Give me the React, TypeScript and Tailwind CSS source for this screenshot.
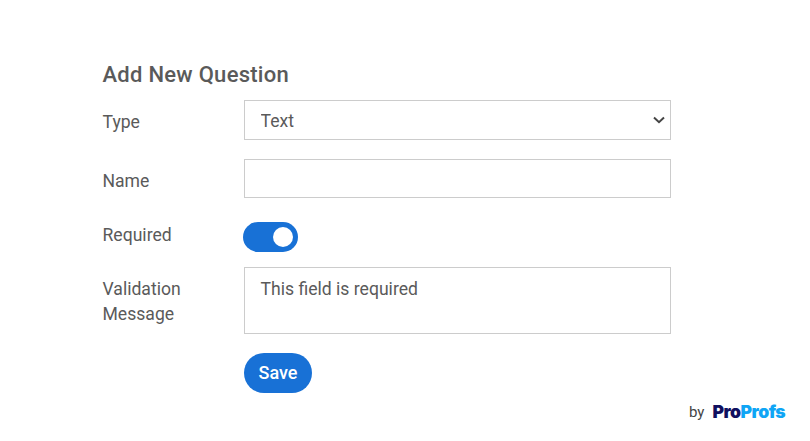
export default function App() {
  return (
    <div className="relative h-[441px] w-[810px] overflow-hidden bg-white font-['Roboto',sans-serif] text-[#5a5a5a]">
      <div className="flex flex-col pl-[102px] pt-[61px]">
        <h2 className="h-[39px] pl-[0.5px] text-[22px] leading-[27px] font-medium tracking-[0.27px] text-[#5a5a5a]">Add New Question</h2>
        <div className="flex h-[59px]">
          <label className="w-[142px] pt-[10px] pl-[0.5px] text-[17.6px] leading-[25px]">Type</label>
          <div className="relative h-[40px] w-[427px]">
            <select
              defaultValue="Text"
              className="h-[40px] w-[427px] appearance-none rounded-none border border-[#cccccc] bg-white pt-[2px] pl-[15.5px] text-[17.6px] text-[#5a5a5a] outline-none"
            >
              <option>Text</option>
            </select>
            <svg className="absolute top-[16px] right-[6px] h-[8px] w-[12px]" viewBox="0 0 12 8" fill="none">
              <path d="M1 1.5 L6 6.2 L11 1.5" stroke="#444444" strokeWidth="2" />
            </svg>
          </div>
        </div>
        <div className="flex h-[63px]">
          <label className="w-[142px] pt-[10px] pl-[0.5px] text-[17.6px] leading-[25px]">Name</label>
          <input type="text" className="h-[39px] w-[427px] border border-[#cccccc] bg-white outline-none" />
        </div>
        <div className="flex h-[45px]">
          <label className="w-[141px] pt-[1px] pl-[0.5px] text-[17.6px] leading-[25px]">Required</label>
          <div className="flex h-[30px] w-[55px] items-center justify-end rounded-full bg-[#1871d6] pr-[5px]">
            <span className="h-[20px] w-[20px] rounded-full bg-white" />
          </div>
        </div>
        <div className="flex h-[86px]">
          <label className="w-[142px] pt-[10px] pl-[0.5px] text-[17.6px] leading-[25px]">
            Validation
            <br />
            Message
          </label>
          <textarea
            readOnly
            defaultValue="This field is required"
            className="h-[67px] w-[427px] resize-none border border-[#cccccc] bg-white pt-[8px] pr-[16px] pb-[6px] pl-[15.5px] text-[17.6px] leading-[27px] text-[#5a5a5a] outline-none"
          />
        </div>
        <div className="pl-[142px]">
          <button className="h-[40px] w-[68px] rounded-full bg-[#1871d6] pb-[2px] text-[18px] font-medium text-white">Save</button>
        </div>
      </div>
      <div className="absolute top-[402px] left-[689px] flex items-center gap-[8px]">
        <span className="text-[15px] leading-[20px] font-normal text-[#444444]">by</span>
        <span className="font-['Inter',sans-serif] text-[17.6px] leading-[20px] font-black tracking-[-0.5px]">
          <span className="text-[#10105f]">Pro</span>
          <span className="text-[#0fa5f5]">Profs</span>
        </span>
      </div>
    </div>
  );
}
